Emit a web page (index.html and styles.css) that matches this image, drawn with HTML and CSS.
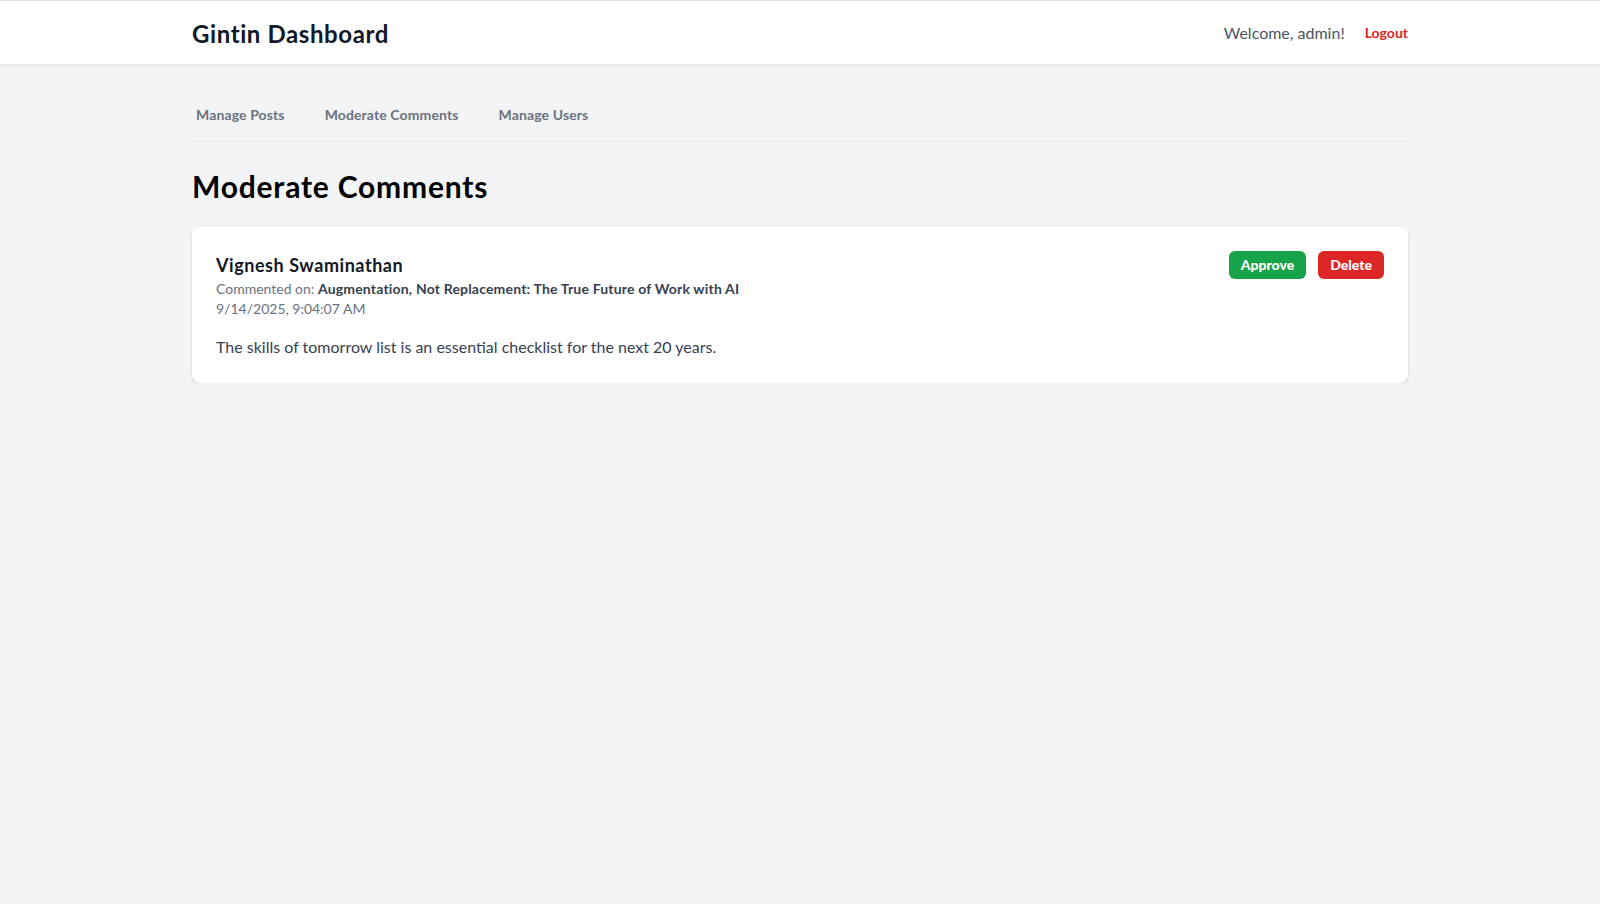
FILE: index.html
```html
<!DOCTYPE html>
<html lang="en">
<head>
<meta charset="utf-8">
<title>Gintin Dashboard</title>
<link rel="stylesheet" href="styles.css">
</head>
<body>
<header class="topbar">
  <div class="container topbar-inner">
    <div class="brand">Gintin Dashboard</div>
    <div class="user">
      <span class="welcome">Welcome, admin!</span>
      <a class="logout" href="#">Logout</a>
    </div>
  </div>
</header>
<main class="container main">
  <nav class="tabs">
    <a class="tab" href="#">Manage Posts</a>
    <a class="tab" href="#">Moderate Comments</a>
    <a class="tab" href="#">Manage Users</a>
  </nav>
  <h1 class="page-title">Moderate Comments</h1>
  <div class="card">
    <div class="card-head">
      <div class="meta">
        <div class="author">Vignesh Swaminathan</div>
        <div class="on">Commented on: <strong>Augmentation, Not Replacement: The True Future of Work with AI</strong></div>
        <div class="date">9/14/2025, 9:04:07 AM</div>
      </div>
      <div class="actions">
        <button class="btn btn-approve">Approve</button>
        <button class="btn btn-delete">Delete</button>
      </div>
    </div>
    <p class="body">The skills of tomorrow list is an essential checklist for the next 20 years.</p>
  </div>
</main>
</body>
</html>
```
FILE: styles.css
```css
* { box-sizing: border-box; }
html, body { margin: 0; padding: 0; }
body {
  background: #f3f4f6;
  font-family: Lato, "Noto Sans", sans-serif;
  color: #111827;
  border-top: 1px solid #e2e2e2;
}
.container {
  max-width: 1280px;
  margin: 0 auto;
  padding: 0 32px;
}
.topbar {
  background: #fff;
  box-shadow: 0 1px 2px rgba(0,0,0,0.06);
  border-bottom: 1px solid #e9eaec;
}
.topbar-inner {
  display: flex;
  align-items: center;
  justify-content: space-between;
  height: 63px;
}
.brand {
  font-size: 24px;
  font-weight: 700;
  color: #111827;
  padding-top: 2px;
  letter-spacing: 0.6px;
}
.user {
  display: flex;
  align-items: center;
  gap: 20px;
}
.welcome {
  font-size: 16px;
  color: #4b5563;
}
.logout {
  font-size: 14px;
  font-weight: 700;
  color: #dc2626;
  text-decoration: none;
}
.main { padding-top: 24px; }
.tabs {
  display: flex;
  gap: 32px;
  border-bottom: 1px solid #e5e7eb;
}
.tab {
  padding: 16px 4px;
  font-size: 14px;
  line-height: 20px;
  font-weight: 700;
  color: #6b7280;
  text-decoration: none;
  letter-spacing: 0.12px;
}
.page-title {
  margin: 24px 0 23px;
  font-size: 30px;
  line-height: 36px;
  font-weight: 700;
  color: #000;
  padding-top: 2px;
  letter-spacing: 0.8px;
}
.card {
  background: #fff;
  border-radius: 8px;
  box-shadow: 0 1px 3px rgba(0,0,0,0.12), 0 1px 2px rgba(0,0,0,0.07);
  padding: 24px;
}
.card-head {
  display: flex;
  justify-content: space-between;
  align-items: flex-start;
}
.author {
  font-size: 18px;
  line-height: 28px;
  font-weight: 700;
  color: #111827;
  letter-spacing: 0.55px;
}
.on, .date {
  font-size: 14px;
  line-height: 20px;
  color: #6b7280;
}
.on strong {
  font-weight: 700;
  color: #374151;
  letter-spacing: 0.18px;
}
.actions {
  display: flex;
  gap: 12px;
}
.btn {
  border: 0;
  border-radius: 6px;
  padding: 4px 12px;
  font-family: inherit;
  font-size: 14px;
  line-height: 20px;
  font-weight: 900;
  color: #fff;
  cursor: pointer;
}
.btn-approve { background: #16a34a; }
.btn-delete { background: #dc2626; }
.body {
  margin: 16px 0 0;
  font-size: 16px;
  line-height: 24px;
  color: #374151;
}
```
